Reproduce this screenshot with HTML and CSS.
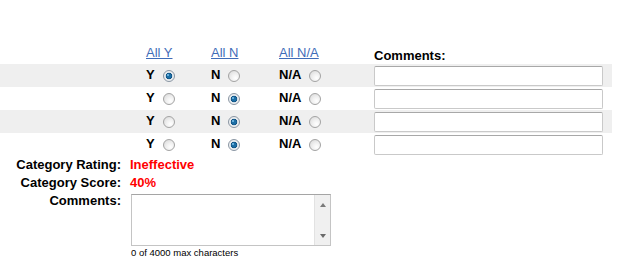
FILE: index.html
```html
<!DOCTYPE html>
<html lang="en">
<head>
    <meta charset="UTF-8">
    <title>Category Review</title>
    <link rel="stylesheet" href="styles.css">
</head>
<body>
    <div class="ratings">
        <div class="row head">
            <span></span>
            <a href="#" class="all">All Y</a>
            <a href="#" class="all">All N</a>
            <a href="#" class="all">All N/A</a>
            <span class="col-title">Comments:</span>
        </div>

        <div class="row band">
            <span></span>
            <label class="opt">Y <input type="radio" name="q1" checked></label>
            <label class="opt">N <input type="radio" name="q1"></label>
            <label class="opt">N/A <input type="radio" name="q1"></label>
            <input type="text" class="comment">
        </div>
        <div class="row">
            <span></span>
            <label class="opt">Y <input type="radio" name="q2"></label>
            <label class="opt">N <input type="radio" name="q2" checked></label>
            <label class="opt">N/A <input type="radio" name="q2"></label>
            <input type="text" class="comment">
        </div>
        <div class="row band">
            <span></span>
            <label class="opt">Y <input type="radio" name="q3"></label>
            <label class="opt">N <input type="radio" name="q3" checked></label>
            <label class="opt">N/A <input type="radio" name="q3"></label>
            <input type="text" class="comment">
        </div>
        <div class="row">
            <span></span>
            <label class="opt">Y <input type="radio" name="q4"></label>
            <label class="opt">N <input type="radio" name="q4" checked></label>
            <label class="opt">N/A <input type="radio" name="q4"></label>
            <input type="text" class="comment">
        </div>
    </div>

    <div class="summary">
        <span class="label">Category Rating:</span>
        <span class="value">Ineffective</span>

        <span class="label">Category Score:</span>
        <span class="value">40%</span>

        <span class="label">Comments:</span>
        <div class="notes">
            <div class="notes-box">
                <textarea class="notes-text"></textarea>
                <div class="scrollbar">
                    <span class="arrow up"></span>
                    <span class="arrow down"></span>
                </div>
            </div>
            <div class="counter">0 of 4000 max characters</div>
        </div>
    </div>
</body>
</html>
```

FILE: styles.css
```css
* {
    margin: 0;
    padding: 0;
    box-sizing: border-box;
}

body {
    background: #fff;
    color: #000;
    font-family: "Liberation Sans", Arial, sans-serif;
    font-size: 13px;
}

.ratings {
    padding-top: 42px;
    width: 612px;
}

.row {
    display: grid;
    grid-template-columns: 146px 65px 68px 95px 229px;
    height: 23px;
    line-height: 22px;
}

.row.band {
    background: #efefef;
}

.row.head {
    height: 22px;
    line-height: 21px;
}

.all {
    color: #3f6cb8;
    text-decoration: underline;
}

.col-title {
    font-weight: bold;
    align-self: end;
    line-height: 16px;
}

.opt {
    display: flex;
    align-items: flex-start;
    gap: 8px;
    font-weight: bold;
}

.opt input {
    appearance: none;
    -webkit-appearance: none;
    width: 12px;
    height: 12px;
    margin-top: 6px;
    border-radius: 50%;
    border: 1px solid #a3a3a3;
    background: radial-gradient(circle at 65% 70%, #ffffff 0%, #f1f1f1 40%, #d6d6d6 100%);
    position: relative;
}

.opt input:checked {
    border-color: #8a96a3;
    background: radial-gradient(circle at 50% 50%, #1c6fa6 0, #1c6fa6 2px, #0f4f80 3px, #e8ecef 3.6px, #f3f3f3 100%);
}

.opt input:checked::after {
    content: "";
    position: absolute;
    left: 3px;
    top: 3px;
    width: 2px;
    height: 2px;
    border-radius: 50%;
    background: #7fc3ec;
}

.comment {
    height: 20px;
    align-self: center;
    border: 1px solid #c9c9c9;
    border-top-color: #a8a8a8;
    border-radius: 2px;
    background: #fff;
    font: inherit;
}

.summary {
    display: grid;
    grid-template-columns: 121px 201px;
    column-gap: 9px;
    line-height: 18px;
    font-weight: bold;
}

.label {
    text-align: right;
}

.value {
    color: #f00;
}

.notes {
    padding-top: 2px;
    margin-left: 1px;
    font-weight: normal;
}

.notes-box {
    display: flex;
    height: 52px;
    border: 1px solid #c4c4c4;
    border-top-color: #a5a5a5;
    background: #fff;
}

.notes-text {
    flex: 1;
    border: none;
    outline: none;
    resize: none;
    overflow: hidden;
    font: inherit;
}

.scrollbar {
    width: 16px;
    background: #f0f0f0;
    border-left: 1px solid #e2e2e2;
    display: flex;
    flex-direction: column;
    justify-content: space-between;
    align-items: center;
    padding: 8px 0 7px;
}

.arrow {
    width: 0;
    height: 0;
    border-left: 3.5px solid transparent;
    border-right: 3.5px solid transparent;
}

.arrow.up {
    border-bottom: 4px solid #7a7a7a;
}

.arrow.down {
    border-top: 4px solid #6a6a6a;
}

.counter {
    margin-top: 1px;
    font-size: 9.5px;
    line-height: 11px;
    color: #000;
}
```
